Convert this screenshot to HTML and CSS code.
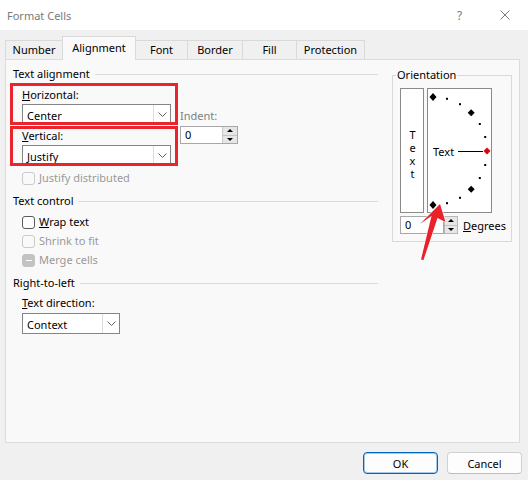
FILE: index.html
```html
<!DOCTYPE html>
<html lang="en">
<head>
<meta charset="utf-8">
<title>Format Cells</title>
<link rel="stylesheet" href="styles.css">
</head>
<body>
<div class="titlebar">
  <span class="title">Format Cells</span>
  <span class="help">?</span>
  <span class="close"><svg width="10" height="10" viewBox="0 0 10 10"><path d="M0.5 0.5L9.5 9.5M9.5 0.5L0.5 9.5" stroke="#7a7a7a" stroke-width="1" fill="none"/></svg></span>
</div>
<div class="tabs">
  <div class="tab t-number">Number</div>
  <div class="tab t-align active">Alignment</div>
  <div class="tab t-font">Font</div>
  <div class="tab t-border">Border</div>
  <div class="tab t-fill">Fill</div>
  <div class="tab t-prot">Protection</div>
</div>
<div class="panel">
  <div class="left">
    <div class="head">Text alignment</div>
    <div class="align">
      <div class="col-a">
        <div class="lbl"><u>H</u>orizontal:</div>
        <div class="combo w-main"><span class="combo-val">Center</span><span class="combo-btn"><svg width="9" height="5" viewBox="0 0 9 5"><path d="M0.5 0.5L4.5 4.5L8.5 0.5" fill="none" stroke="#606060"/></svg></span></div>
        <div class="lbl v"><u>V</u>ertical:</div>
        <div class="combo w-main"><span class="combo-val">Justify</span><span class="combo-btn"><svg width="9" height="5" viewBox="0 0 9 5"><path d="M0.5 0.5L4.5 4.5L8.5 0.5" fill="none" stroke="#606060"/></svg></span></div>
      </div>
      <div class="col-b">
        <div class="lbl indent-lbl">Indent:</div>
        <div class="spinner w-indent"><span class="sp-val">0</span><span class="sp-btns"><span class="sp-up"></span><span class="sp-down"></span></span></div>
      </div>
    </div>
    <div class="check jd"><span class="cb dis"></span><span class="dim">Justify distributed</span></div>

    <div class="head tc">Text control</div>
    <div class="checks">
      <div class="check"><span class="cb"></span><span><u>W</u>rap text</span></div>
      <div class="check"><span class="cb dis"></span><span class="dim">Shrink to fit</span></div>
      <div class="check"><span class="cb mixed"></span><span class="dim">Merge cells</span></div>
    </div>

    <div class="head rtl">Right-to-left</div>
    <div class="lbl td"><u>T</u>ext direction:</div>
    <div class="combo w-ctx"><span class="combo-val">Context</span><span class="combo-btn"><svg width="9" height="5" viewBox="0 0 9 5"><path d="M0.5 0.5L4.5 4.5L8.5 0.5" fill="none" stroke="#606060"/></svg></span></div>
  </div>

  <div class="right">
    <div class="orient">
      <div class="orient-title">Orientation</div>
      <div class="orient-boxes">
        <div class="vbox"><span class="vtext">Text</span></div>
        <div class="dial">
          <svg width="63" height="123" viewBox="0 0 63 123">
            <g fill="#000">
              <polygon points="5,4 8.5,8 5,12 1.5,8"/>
              <rect x="18" y="8.8" width="2" height="2"/>
              <rect x="31" y="14.2" width="2" height="2"/>
              <polygon points="43.2,20.3 46.7,23.8 43.2,27.3 39.7,23.8"/>
              <rect x="50.8" y="34" width="2" height="2"/>
              <rect x="56.2" y="47" width="2" height="2"/>
              <rect x="56.2" y="75" width="2" height="2"/>
              <rect x="50.8" y="88" width="2" height="2"/>
              <polygon points="43.2,96.7 46.7,100.2 43.2,103.7 39.7,100.2"/>
              <rect x="31" y="107.8" width="2" height="2"/>
              <rect x="18" y="113.2" width="2" height="2"/>
              <polygon points="5,112 8.5,116 5,120 1.5,116"/>
            </g>
            <line x1="30" y1="62.5" x2="55" y2="62.5" stroke="#000" stroke-width="1"/>
            <polygon points="59,58.5 62.5,62 59,65.5 55.5,62" fill="#e0000a"/>
            <text x="5" y="67" class="dial-text">Text</text>
          </svg>
        </div>
      </div>
      <div class="deg-row">
        <div class="deg-input">0</div>
        <div class="deg-spin"><span class="sp-up"></span><span class="sp-down"></span></div>
        <span class="deg-label"><u>D</u>egrees</span>
      </div>
    </div>
  </div>

  <div class="hl hl-h"></div>
  <div class="hl hl-v"></div>
  <svg class="arrow" width="40" height="66" viewBox="0 0 40 66">
    <polygon points="30,6 35.5,24 27.5,20 13.5,62 11,61.5 21.5,18 10,26" fill="#e8212b" stroke="#ffffff" stroke-width="1.2" stroke-linejoin="round" paint-order="stroke"/>
  </svg>
</div>
<div class="buttons">
  <div class="btn primary">OK</div>
  <div class="btn">Cancel</div>
</div>
</body>
</html>
```
FILE: styles.css
```css
* { box-sizing: border-box; }
html, body { margin: 0; padding: 0; }
body {
  width: 528px;
  height: 480px;
  overflow: hidden;
  background: #f0f0f0;
  font-family: "Noto Sans", "Segoe UI", sans-serif;
  font-size: 11px;
  color: #000;
}
u { text-decoration: underline; text-underline-offset: 1px; }

/* title bar */
.titlebar {
  height: 30px;
  background: #fff;
  display: flex;
  align-items: center;
  padding-left: 7px;
  padding-right: 18px;
}
.title { flex: 1; color: #7a7a7a; }
.help {
  width: 13px;
  text-align: center;
  color: #7a7a7a;
  font-size: 12px;
  margin-right: 34px;
}
.close { width: 10px; height: 10px; display: flex; }

/* tabs */
.tabs {
  height: 29px;
  display: flex;
  align-items: flex-end;
  padding-left: 5px;
}
.tab {
  height: 19px;
  border: 1px solid #d9d9d9;
  border-bottom: none;
  background: #f0f0f0;
  text-align: center;
  line-height: 16px;
  padding-top: 1px;
  margin-right: -1px;
}
.tab.active {
  height: 24px;
  padding-top: 3px;
  background: #f9f9f9;
  margin-bottom: -1px;
  position: relative;
  z-index: 2;
}
.t-number { width: 58px; }
.t-align { width: 74px; }
.t-font { width: 53px; }
.t-border { width: 56px; }
.t-fill { width: 55px; }
.t-prot { width: 69px; }

/* panel */
.panel {
  position: relative;
  margin-left: 5px;
  width: 515px;
  height: 384px;
  background: #f9f9f9;
  border: 1px solid #dcdcdc;
  display: flex;
  align-items: flex-start;
}
.left {
  width: 374px;
  padding: 6px 0 0 7px;
}
.head {
  display: flex;
  align-items: center;
  height: 16px;
  line-height: 16px;
}
.head::after {
  content: "";
  flex: 1;
  height: 1px;
  background: #dadada;
  margin: 0 2px 0 5px;
}
.head.tc { margin-top: 7px; }
.head.rtl { margin-top: 7px; }

.lbl { height: 16px; line-height: 16px; }
.dim { color: #9a9a9a; }
.indent-lbl { color: #808080; }

.align {
  display: flex;
  gap: 9px;
  margin-top: 5px;
  padding-left: 9px;
}
.col-a { display: flex; flex-direction: column; }
.col-a .combo { margin-top: 1px; }
.col-a .lbl.v { margin-top: 3px; }
.col-b { padding-top: 21px; }
.col-b .spinner { margin-top: 2px; }

/* combo */
.combo {
  display: flex;
  height: 21px;
  border: 1px solid #858585;
  background: #fff;
}
.w-main { width: 149px; }
.w-ctx { width: 98px; margin: 2px 0 0 9px; }
.combo-val {
  flex: 1;
  padding-left: 4px;
  line-height: 19px;
  padding-top: 1px;
}
.combo-btn {
  width: 17px;
  border-left: 1px solid #dcdcdc;
  display: flex;
  align-items: center;
  justify-content: center;
}

/* spinners */
.spinner {
  display: flex;
  height: 18px;
  border: 1px solid #a8a8a8;
  background: #fff;
}
.w-indent { width: 58px; }
.sp-val { flex: 1; padding-left: 4px; line-height: 16px; }
.sp-btns {
  width: 15px;
  display: flex;
  flex-direction: column;
  border-left: 1px solid #c8c8c8;
  background: #e6e6e6;
}
.sp-up, .sp-down {
  flex: 1;
  display: flex;
  align-items: center;
  justify-content: center;
}
.sp-up { border-bottom: 1px solid #c4c4c4; }
.sp-up::after {
  content: "";
  border-left: 3px solid transparent;
  border-right: 3px solid transparent;
  border-bottom: 3px solid #000;
}
.sp-down::after {
  content: "";
  border-left: 3px solid transparent;
  border-right: 3px solid transparent;
  border-top: 3px solid #000;
}

/* checkboxes */
.check {
  display: flex;
  align-items: center;
  gap: 4px;
  height: 16px;
  line-height: 16px;
  padding-left: 9px;
}
.check.jd { margin-top: 4px; }
.checks {
  display: flex;
  flex-direction: column;
  gap: 3px;
  margin-top: 5px;
}
.cb {
  flex: none;
  width: 13px;
  height: 13px;
  border: 1px solid #5a5a5a;
  border-radius: 3px;
  background: #fdfdfd;
}
.cb.dis { border-color: #cacaca; background: #f9f9f9; }
.cb.mixed {
  border-color: #c3c3c3;
  background: #c3c3c3;
  display: flex;
  align-items: center;
  justify-content: center;
}
.cb.mixed::after {
  content: "";
  width: 6px;
  height: 1px;
  background: #fff;
}
.lbl.td { margin-top: 4px; padding-left: 9px; }

/* orientation */
.right {
  width: 139px;
  padding-left: 12px;
}
.orient {
  margin-top: 15px;
  width: 120px;
  border: 1px solid #d9d9d9;
  padding: 0 0 7px 7px;
}
.orient-title {
  width: max-content;
  margin: -9px 0 0 -4px;
  padding: 0 1px;
  height: 16px;
  line-height: 16px;
  background: #f9f9f9;
}
.orient-boxes {
  display: flex;
  gap: 3px;
  margin-top: 5px;
}
.vbox {
  width: 24px;
  height: 125px;
  border: 1px solid #8a8a8a;
  background: #fff;
  display: flex;
  align-items: center;
  justify-content: center;
  padding-top: 4px;
}
.vtext {
  writing-mode: vertical-lr;
  text-orientation: upright;
  letter-spacing: -2px;
  line-height: 16px;
}
.dial {
  width: 65px;
  height: 125px;
  border: 1px solid #8a8a8a;
  background: #fff;
  display: flex;
}
.dial-text {
  font-family: "Noto Sans", "Segoe UI", sans-serif;
  font-size: 11px;
  fill: #000;
}
.deg-row {
  display: flex;
  align-items: center;
  margin-top: 3px;
  height: 18px;
}
.deg-input {
  width: 44px;
  height: 18px;
  border: 1px solid #a8a8a8;
  background: #fff;
  line-height: 16px;
  padding-left: 4px;
}
.deg-spin {
  width: 14px;
  height: 18px;
  border: 1px solid #b8b8b8;
  background: #e6e6e6;
  display: flex;
  flex-direction: column;
}
.deg-label { margin-left: 5px; }

/* annotations */
.hl {
  position: absolute;
  left: 4px;
  width: 168px;
  border: 3px solid #ea232d;
  z-index: 3;
}
.hl-h { top: 23px; height: 42px; }
.hl-v { top: 66px; height: 40px; }
.arrow {
  position: absolute;
  left: 404px;
  top: 138px;
  z-index: 4;
}

/* buttons */
.buttons {
  display: flex;
  justify-content: flex-end;
  gap: 9px;
  padding-right: 6px;
  margin-top: 9px;
}
.btn {
  width: 75px;
  height: 22px;
  border: 1px solid #d0d0d0;
  border-bottom-color: #bdbdbd;
  border-radius: 4px;
  background: #fdfdfd;
  display: flex;
  align-items: center;
  justify-content: center;
}
.btn.primary {
  border-color: #0067c0;
  box-shadow: inset 0 0 0 1px rgba(0, 103, 192, 0.35);
}
```
